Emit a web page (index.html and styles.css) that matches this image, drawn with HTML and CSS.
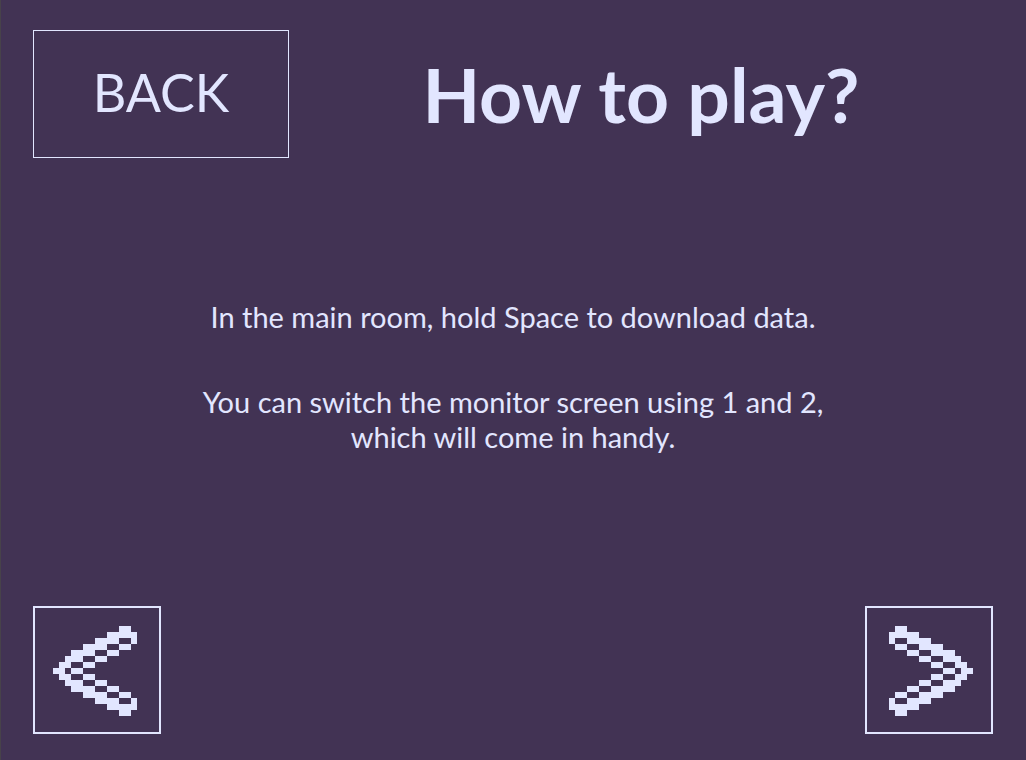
FILE: index.html
```html
<!DOCTYPE html>
<html lang="en">
<head>
<meta charset="utf-8">
<meta name="viewport" content="width=device-width, initial-scale=1">
<title>How to play?</title>
<link rel="stylesheet" href="styles.css">
</head>
<body>
<div class="screen">
  <header class="header">
    <button class="back" type="button">BACK</button>
    <h1 class="title">How to play?</h1>
  </header>
  <main class="guide">
    <p>In the main room, hold Space to download data.</p>
    <p>You can switch the monitor screen using 1 and 2,<br>which will come in handy.</p>
  </main>
  <nav class="pager" aria-label="Pages">
    <button class="page page-previous" type="button" aria-label="Previous page">
      <svg class="arrow" viewBox="0 0 14 15" aria-hidden="true"><path d="M11 0h2v1h-2zM9 1h5v1h-5zM7 2h4v1h-4zM13 2h1v1h-1zM5 3h4v1h-4zM11 3h2v1h-2zM3 4h4v1h-4zM9 4h2v1h-2zM2 5h3v1h-3zM7 5h2v1h-2zM1 6h2v1h-2zM5 6h2v1h-2zM0 7h2v1h-2zM3 7h2v1h-2zM1 8h2v1h-2zM5 8h2v1h-2zM2 9h3v1h-3zM7 9h2v1h-2zM3 10h4v1h-4zM9 10h2v1h-2zM5 11h4v1h-4zM11 11h2v1h-2zM7 12h4v1h-4zM13 12h1v1h-1zM9 13h5v1h-5zM11 14h2v1h-2z"/></svg>
    </button>
    <button class="page page-next" type="button" aria-label="Next page">
      <svg class="arrow arrow-next" viewBox="0 0 14 15" aria-hidden="true"><path d="M11 0h2v1h-2zM9 1h5v1h-5zM7 2h4v1h-4zM13 2h1v1h-1zM5 3h4v1h-4zM11 3h2v1h-2zM3 4h4v1h-4zM9 4h2v1h-2zM2 5h3v1h-3zM7 5h2v1h-2zM1 6h2v1h-2zM5 6h2v1h-2zM0 7h2v1h-2zM3 7h2v1h-2zM1 8h2v1h-2zM5 8h2v1h-2zM2 9h3v1h-3zM7 9h2v1h-2zM3 10h4v1h-4zM9 10h2v1h-2zM5 11h4v1h-4zM11 11h2v1h-2zM7 12h4v1h-4zM13 12h1v1h-1zM9 13h5v1h-5zM11 14h2v1h-2z"/></svg>
    </button>
  </nav>
</div>
</body>
</html>
```
FILE: styles.css
```css
* { box-sizing: border-box; }
body {
  margin: 0;
  background: #423354;
  color: #e2e6ff;
  font-family: Lato, "Liberation Sans", sans-serif;
}
.screen {
  min-height: 100vh;
  display: flex;
  flex-direction: column;
  padding: 30px 33px 26px 32px;
  border-left: 1px solid #47424a;
}
.header {
  display: grid;
  grid-template-columns: 256px 1fr;
  align-items: center;
}
button {
  margin: 0;
  padding: 0;
  background: transparent;
  color: inherit;
  font: inherit;
  cursor: pointer;
}
.back {
  height: 128px;
  padding-bottom: 4px;
  border: 1px solid #e2e6ff;
  font-size: 52px;
  line-height: 64px;
}
.title {
  margin: 0;
  text-align: center;
  font-size: 75px;
  line-height: 96px;
  font-weight: 700;
}
.guide {
  flex: 1;
  display: flex;
  flex-direction: column;
  justify-content: center;
  gap: 50px;
  padding-bottom: 12px;
  text-align: center;
  font-size: 29px;
  line-height: 35px;
}
.guide p { margin: 0; }
.pager {
  display: flex;
  justify-content: space-between;
}
.page {
  display: grid;
  place-items: center;
  width: 128px;
  height: 128px;
  padding-top: 2px;
  border: 2px solid #e2e6ff;
}
.page-previous { padding-right: 4px; }
.page-next { padding-left: 4px; }
.arrow {
  display: block;
  width: 84px;
  height: 90px;
  fill: #e2e6ff;
  shape-rendering: crispEdges;
}
.arrow-next { transform: scaleX(-1); }
```
